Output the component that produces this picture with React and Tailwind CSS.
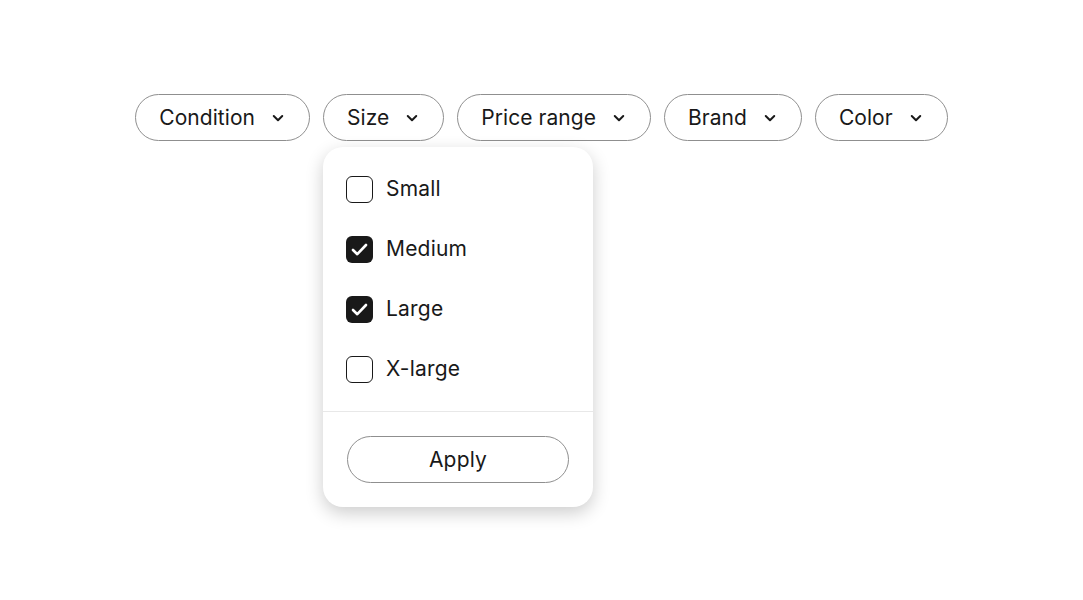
import React, { useState } from 'react';

const filters = ['Condition', 'Size', 'Price range', 'Brand', 'Color'];

const Chevron = () => (
  <svg width="14" height="14" viewBox="0 0 14 14" fill="none" className="shrink-0">
    <path d="M2.75 5 7 9.25 11.25 5" stroke="#191919" strokeWidth="2" strokeLinecap="round" strokeLinejoin="round" />
  </svg>
);

const Checkbox = ({ checked }) =>
  checked ? (
    <span className="flex items-center justify-center w-[27px] h-[27px] rounded-[6px] bg-[#191919]">
      <svg width="27" height="27" viewBox="0 0 27 27" fill="none">
        <path d="M7 14 11.3 18.2 20 9" stroke="#fff" strokeWidth="2.6" strokeLinecap="round" strokeLinejoin="round" />
      </svg>
    </span>
  ) : (
    <span className="block w-[27px] h-[27px] rounded-[6px] border-[1.5px] border-[#191919] bg-white" />
  );

export default function App() {
  const [sizes, setSizes] = useState({ Small: false, Medium: true, Large: true, 'X-large': false });

  return (
    <div className="w-full min-h-[600px] bg-white text-[#191919] font-['Inter','Liberation_Sans',sans-serif]">
      <div className="flex justify-center gap-[13px] pt-[94px]">
        {filters.map((f) => (
          <div key={f} className="relative">
            <button className="flex items-center gap-4 h-[47px] pl-[23px] pr-[24px] rounded-full border border-[#8f8f8f] text-[21px] tracking-[0.05px] leading-none bg-white">
              <span>{f}</span>
              <Chevron />
            </button>
            {f === 'Size' && (
              <div className="absolute left-0 top-[53px] w-[270px] bg-white rounded-[20px] shadow-[0_6px_18px_rgba(0,0,0,0.2)] z-10">
                <div className="px-[23px] py-3">
                  {Object.keys(sizes).map((s) => (
                    <label
                      key={s}
                      className="flex items-center gap-[13px] h-[60px] text-[21px] tracking-[0.2px] cursor-pointer"
                      onClick={() => setSizes({ ...sizes, [s]: !sizes[s] })}
                    >
                      <Checkbox checked={sizes[s]} />
                      <span>{s}</span>
                    </label>
                  ))}
                </div>
                <div className="border-t border-[#e8e8e8] px-6 pt-6 pb-6">
                  <button className="w-full h-[47px] rounded-full border border-[#8f8f8f] text-[21px] tracking-[0.2px] bg-white">
                    Apply
                  </button>
                </div>
              </div>
            )}
          </div>
        ))}
      </div>
    </div>
  );
}
